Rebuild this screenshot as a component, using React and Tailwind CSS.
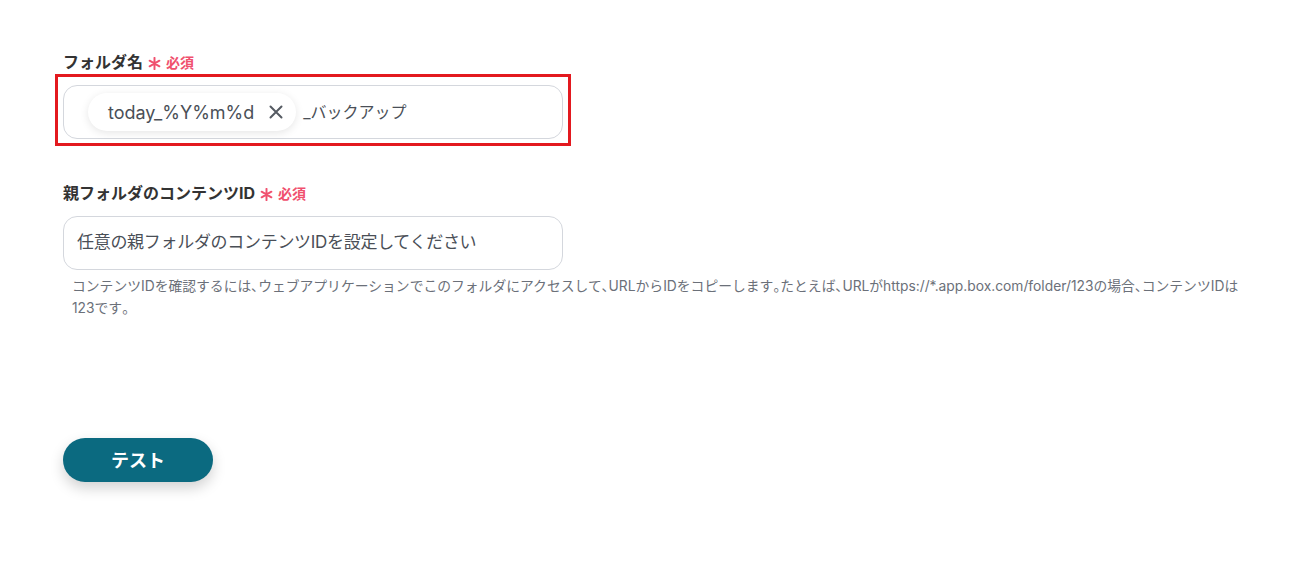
import React from "react";

const font = { fontFamily: "Inter, 'Noto Sans CJK JP', sans-serif" };

function Label({ children }) {
  return (
    <div className="flex items-center h-[20px] text-[16px] font-bold text-[#333333]">
      <span>{children}</span>
      <svg className="ml-[5px] mt-[3px]" width="13" height="13" viewBox="0 0 12 12" fill="none" stroke="#f0506e" strokeWidth="1.8" strokeLinecap="round">
        <path d="M6 0.8 V11.2 M1.5 3.4 L10.5 8.6 M10.5 3.4 L1.5 8.6" />
      </svg>
      <span className="ml-[5px] text-[#f0506e] text-[14px] font-bold">必須</span>
    </div>
  );
}

function Narrow({ text }) {
  const parts = text.split(/([、。])/);
  return (
    <>
      {parts.map((p, i) =>
        p === "、" || p === "。" ? (
          <span key={i} className="[font-feature-settings:'palt']">{p}</span>
        ) : (
          <React.Fragment key={i}>{p}</React.Fragment>
        )
      )}
    </>
  );
}

export default function App() {
  return (
    <div className="w-[1298px] h-[582px] bg-white pt-[52px] pl-[63px]" style={font}>
      <Label>フォルダ名</Label>
      <div className="ml-[-8px] mt-[2px] w-[516px] border-[3px] border-[#e3191f] pl-[5px] pr-[5px] pt-[8px] pb-[4px]">
        <div className="h-[54px] w-[500px] rounded-[14px] border border-[#d4d7dd] bg-white flex items-center pl-[24px]">
          <div className="h-[38px] flex items-center rounded-full bg-white pl-[20px] pr-[12px] shadow-[0_2px_8px_rgba(0,0,0,0.10)]">
            <span className="text-[18px] text-[#4a4f57]">today_%Y%m%d</span>
            <svg className="ml-[14px]" width="16" height="16" viewBox="0 0 16 16" fill="none" stroke="#555a62" strokeWidth="2" strokeLinecap="round">
              <path d="M2.5 2.5 L13.5 13.5 M13.5 2.5 L2.5 13.5" />
            </svg>
          </div>
          <span className="ml-[7px] text-[16px] text-[#4a4f57]">_バックアップ</span>
        </div>
      </div>

      <div className="mt-[37px]">
        <Label>親フォルダのコンテンツID</Label>
      </div>
      <div className="mt-[13px] h-[54px] w-[500px] rounded-[14px] border border-[#d4d7dd] bg-white flex items-center pl-[13px]">
        <span className="text-[17px] tracking-[-0.3px] text-[#4a4f57]">任意の親フォルダのコンテンツIDを設定してください</span>
      </div>
      <p className="mt-[5px] ml-[9px] w-[1180px] text-[13.8px] leading-[22px] text-[#6b7079]">
        <Narrow text="コンテンツIDを確認するには、ウェブアプリケーションでこのフォルダにアクセスして、URLからIDをコピーします。たとえば、URLがhttps://*.app.box.com/folder/123の場合、コンテンツIDは123です。" />
      </p>

      <button className="mt-[119px] w-[150px] h-[44px] rounded-full bg-[#0b6a80] text-white text-[18px] font-bold shadow-[0_6px_14px_rgba(0,0,0,0.18)]">
        テスト
      </button>
    </div>
  );
}
